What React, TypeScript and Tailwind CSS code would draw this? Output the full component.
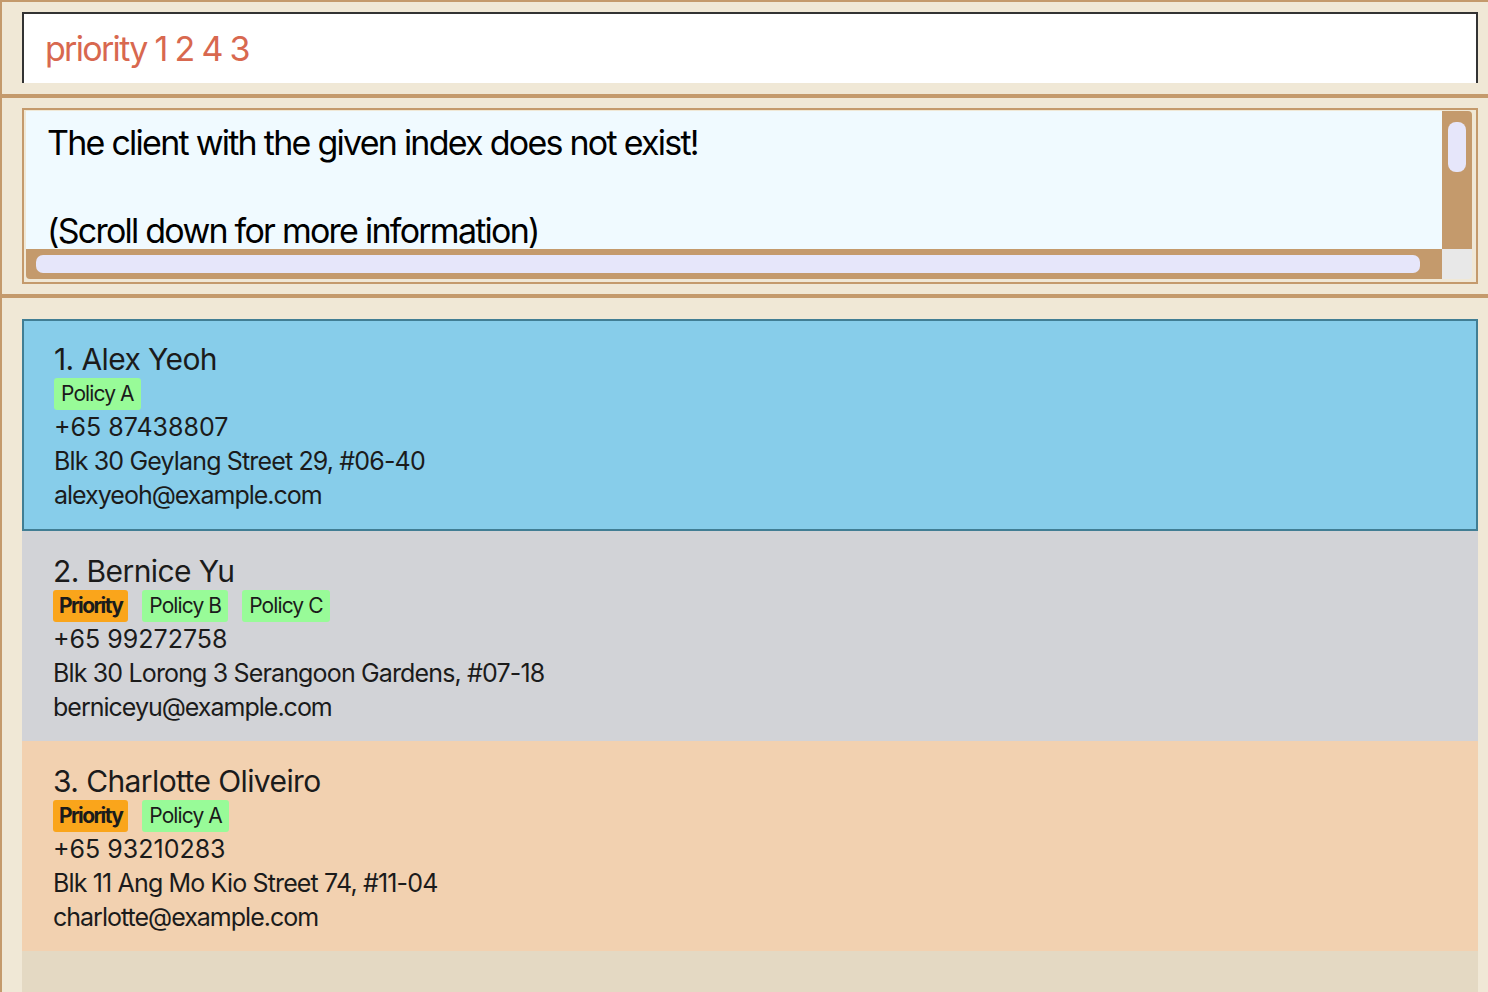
import React from "react";

type Person = {
  name: string;
  priority?: boolean;
  tags: string[];
  phone: string;
  address: string;
  email: string;
};

const people: Person[] = [
  {
    name: "1. Alex Yeoh",
    tags: ["Policy A"],
    phone: "+65 87438807",
    address: "Blk 30 Geylang Street 29, #06-40",
    email: "alexyeoh@example.com",
  },
  {
    name: "2. Bernice Yu",
    priority: true,
    tags: ["Policy B", "Policy C"],
    phone: "+65 99272758",
    address: "Blk 30 Lorong 3 Serangoon Gardens, #07-18",
    email: "berniceyu@example.com",
  },
  {
    name: "3. Charlotte Oliveiro",
    priority: true,
    tags: ["Policy A"],
    phone: "+65 93210283",
    address: "Blk 11 Ang Mo Kio Street 74, #11-04",
    email: "charlotte@example.com",
  },
];

const cardStyles = [
  "bg-[#87cdea] border-2 border-[#417e94] pt-[19px] pb-[17px] pl-[30px]",
  "bg-[#d2d3d7] pt-[21px] pb-[17px] pl-[31px]",
  "bg-[#f2d1b0] pt-[21px] pb-[17px] pl-[31px]",
];

const PersonCard = ({ person, idx }: { person: Person; idx: number }) => (
  <div className={`flex flex-col text-[#1b1b1b] ${cardStyles[idx]}`}>
    <div className="text-[30px] leading-[38px] tracking-[-0.6px]">{person.name}</div>
    <div className="flex gap-[14px] h-[32px] items-center">
      {person.priority && (
        <span className="bg-[#faa51b] rounded-[3px] px-[6px] h-[32px] flex items-center text-[21px] font-bold tracking-[-1.6px]">
          Priority
        </span>
      )}
      {person.tags.map((t) => (
        <span
          key={t}
          className="bg-[#98fb98] rounded-[3px] px-[7px] h-[32px] flex items-center text-[21px] tracking-[-0.9px]"
        >
          {t}
        </span>
      ))}
    </div>
    <div className="text-[25px] leading-[34px]">{person.phone}</div>
    <div className="text-[25px] leading-[34px] tracking-[-0.85px]">{person.address}</div>
    <div className="text-[25px] leading-[34px] tracking-[-1px]">{person.email}</div>
  </div>
);

const App = () => {
  return (
    <div
      className="w-[1488px] h-[992px] overflow-hidden bg-[#f0e8d6] border-l-2 border-t-2 border-[#c49a6c] flex flex-col"
      style={{ fontFamily: "Inter, 'Noto Sans', sans-serif" }}
    >
      {/* command box */}
      <div className="pt-[10px] pl-[20px] pr-[10px] h-[92px] shrink-0">
        <div className="h-[71px] bg-white border-t-2 border-l-2 border-r-2 border-[#333333] flex items-center pl-[21px]">
          <span className="text-[34px] text-[#d8684f] tracking-[-1.7px]">
            priority 1 2 4 3
          </span>
        </div>
      </div>
      <div className="h-[4px] bg-[#c49a6c] shrink-0" />

      {/* result display */}
      <div className="pt-[10px] pl-[20px] pr-[10px] h-[196px] shrink-0">
        <div className="h-[176px] border-2 border-[#c49a6c] pt-[1px] pl-[2px] pr-[4px] pb-[3px]">
          <div className="grid grid-cols-[1fr_30px] grid-rows-[1fr_30px] h-full">
            <div className="bg-[#f0faff] overflow-hidden pl-[21px] pt-[10px] text-[34px] leading-[44px] text-black tracking-[-1.75px] whitespace-nowrap">
              <div>The client with the given index does not exist!</div>
              <div>&nbsp;</div>
              <div>(Scroll down for more information)</div>
            </div>
            <div className="bg-[#c49a6c] rounded-tr-[4px] pt-[11px] px-[6px]">
              <div className="h-[50px] bg-[#e6e6fa] rounded-[8px]" />
            </div>
            <div className="bg-[#c49a6c] rounded-bl-[4px] pl-[10px] pr-[22px] py-[6px]">
              <div className="h-full bg-[#e6e6fa] rounded-[7px]" />
            </div>
            <div className="bg-[#e8e8e8] rounded-br-[4px]" />
          </div>
        </div>
      </div>
      <div className="h-[4px] bg-[#c49a6c] shrink-0" />

      {/* person list */}
      <div className="pt-[21px] pl-[20px] pr-[10px] flex-1 flex flex-col">
        <div className="flex-1 bg-[#e4d9c3] flex flex-col">
          {people.map((p, i) => (
            <PersonCard key={p.name} person={p} idx={i} />
          ))}
        </div>
      </div>
    </div>
  );
};

export default App;
